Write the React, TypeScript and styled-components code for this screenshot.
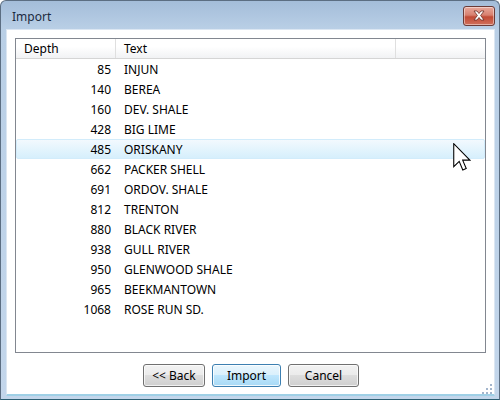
import React from "react";
import styled, { createGlobalStyle, css } from "styled-components";

const GlobalStyle = createGlobalStyle`
  html, body {
    margin: 0;
    padding: 0;
    width: 500px;
    height: 400px;
    overflow: hidden;
    background: #fff;
  }
  * { box-sizing: border-box; }
`;

interface IFormation {
  depth: number;
  name: string;
}

const formations: IFormation[] = [
  { depth: 85, name: "INJUN" },
  { depth: 140, name: "BEREA" },
  { depth: 160, name: "DEV. SHALE" },
  { depth: 428, name: "BIG LIME" },
  { depth: 485, name: "ORISKANY" },
  { depth: 662, name: "PACKER SHELL" },
  { depth: 691, name: "ORDOV. SHALE" },
  { depth: 812, name: "TRENTON" },
  { depth: 880, name: "BLACK RIVER" },
  { depth: 938, name: "GULL RIVER" },
  { depth: 950, name: "GLENWOOD SHALE" },
  { depth: 965, name: "BEEKMANTOWN" },
  { depth: 1068, name: "ROSE RUN SD." },
];

const Window = styled.div`
  position: relative;
  width: 500px;
  height: 400px;
  display: flex;
  flex-direction: column;
  border: 1px solid #5c6e82;
  border-bottom-color: #2c5f73;
  border-radius: 6px 6px 0 0;
  background: linear-gradient(180deg, #a4bdd9 0px, #b9cfe6 28px, #c3d6eb 100%);
  font-family: "Segoe UI", "Noto Sans", "DejaVu Sans", sans-serif;
  font-size: 12px;
  color: #000;
  overflow: hidden;
`;

const TitleBar = styled.div`
  height: 28px;
  flex: none;
  display: flex;
  align-items: center;
  justify-content: space-between;
  padding: 0 4px 2px 11px;
`;

const Title = styled.span`
  font-size: 12px;
  color: #1b2b3f;
  padding-top: 5px;
`;

const CloseButton = styled.div`
  width: 32px;
  height: 20px;
  margin-top: 3px;
  border: 1px solid #6b3b37;
  border-radius: 3px;
  background: linear-gradient(180deg, #e9a99c 0%, #d7806f 45%, #c14a35 55%, #d0705b 100%);
  box-shadow: inset 0 0 0 1px rgba(255, 255, 255, 0.45);
  display: flex;
  align-items: center;
  justify-content: center;
`;

const Client = styled.div`
  flex: 1;
  margin: 0 4px 3px 5px;
  background: #fff;
  border: 1px solid #dbe6f2;
  border-bottom: 2px solid #9fd0e6;
  display: flex;
  flex-direction: column;
  padding: 8px 8px 0 8px;
`;

const ListBox = styled.div`
  height: 315px;
  border: 1px solid #828790;
  display: flex;
  flex-direction: column;
  background: #fff;
`;

const HeaderRow = styled.div`
  height: 20px;
  display: flex;
  background: linear-gradient(180deg, #ffffff 0%, #ffffff 40%, #f1f2f4 100%);
  border-bottom: 1px solid #d5d5d5;
`;

const HeaderCell = styled.div<{ $width?: number }>`
  ${(p) => (p.$width ? css`width: ${p.$width}px;` : css`flex: 1;`)}
  flex-shrink: 0;
  border-right: 1px solid #dfdfdf;
  padding: 0 0 0 8px;
  line-height: 19px;
  color: #000;
  &:last-child {
    border-right: none;
  }
`;

const Body = styled.div`
  display: flex;
  flex-direction: column;
`;

const Row = styled.div<{ $hot?: boolean }>`
  height: 20px;
  display: flex;
  align-items: center;
  border: 1px solid transparent;
  border-radius: 2px;
  ${(p) =>
    p.$hot &&
    css`
      border-color: #d2ecfb;
      background: linear-gradient(180deg, #f2f9fe 0%, #e4f4fd 50%, #d6effc 100%);
    `}
`;

const DepthCell = styled.div`
  width: 98px;
  text-align: right;
  padding-right: 4px;
`;

const NameCell = styled.div`
  padding-left: 9px;
`;

const ButtonBar = styled.div`
  flex: 1;
  display: flex;
  justify-content: center;
  align-items: flex-start;
  gap: 7px;
  padding-top: 11px;
  margin-left: 1px;
`;

const Button = styled.button<{ $width: number; $default?: boolean }>`
  width: ${(p) => p.$width}px;
  height: 23px;
  font-family: inherit;
  font-size: 12px;
  color: #000;
  padding: 0;
  border-radius: 3px;
  border: 1px solid #707070;
  background: linear-gradient(180deg, #f2f2f2 0%, #ebebeb 49%, #dddddd 50%, #cfcfcf 100%);
  box-shadow: inset 0 0 0 1px rgba(255, 255, 255, 0.7);
  ${(p) =>
    p.$default &&
    css`
      border-color: #3c7fb1;
      background: linear-gradient(180deg, #eaf6fd 0%, #d9f0fc 49%, #bee6fd 50%, #a7d9f5 100%);
      box-shadow: inset 0 0 0 1px rgba(255, 255, 255, 0.8);
    `}
`;

const Grip = styled.div`
  position: absolute;
  right: 6px;
  bottom: 6px;
  width: 11px;
  height: 11px;
`;

const Cursor = styled.div`
  position: absolute;
  left: 452px;
  top: 142px;
  width: 18px;
  height: 28px;
`;

const App: React.FC = () => {
  return (
    <>
      <GlobalStyle />
      <Window>
        <TitleBar>
          <Title>Import</Title>
          <CloseButton>
            <svg width="14" height="11" viewBox="0 0 14 11">
              <path
                d="M2 1 L5 1 L7 3.5 L9 1 L12 1 L8.6 5.5 L12 10 L9 10 L7 7.5 L5 10 L2 10 L5.4 5.5 Z"
                fill="#ffffff"
                stroke="#6a2e26"
                strokeWidth="0.8"
                strokeLinejoin="round"
              />
            </svg>
          </CloseButton>
        </TitleBar>
        <Client>
          <ListBox>
            <HeaderRow>
              <HeaderCell $width={100}>Depth</HeaderCell>
              <HeaderCell $width={280}>Text</HeaderCell>
              <HeaderCell />
            </HeaderRow>
            <Body>
              {formations.map((f) => (
                <Row key={f.depth} $hot={f.depth === 485}>
                  <DepthCell>{f.depth}</DepthCell>
                  <NameCell>{f.name}</NameCell>
                </Row>
              ))}
            </Body>
          </ListBox>
          <ButtonBar>
            <Button $width={62}>&lt;&lt; Back</Button>
            <Button $width={69} $default>
              Import
            </Button>
            <Button $width={71}>Cancel</Button>
          </ButtonBar>
        </Client>
        <Grip>
          <svg width="11" height="11" viewBox="0 0 11 11">
            {[
              [8, 0],
              [4, 4],
              [8, 4],
              [0, 8],
              [4, 8],
              [8, 8],
            ].map(([x, y]) => (
              <rect key={`${x}-${y}`} x={x} y={y} width="2" height="2" fill="#a3b5cc" />
            ))}
          </svg>
        </Grip>
        <Cursor>
          <svg width="18" height="28" viewBox="0 0 12.5 19.5">
            <path
              d="M0.5 0.5 L0.5 16.5 L4.3 12.8 L6.8 18.8 L9.2 17.8 L6.7 11.9 L11.7 11.9 Z"
              fill="#ffffff"
              stroke="#000000"
              strokeWidth="0.75"
              strokeLinejoin="miter"
            />
          </svg>
        </Cursor>
      </Window>
    </>
  );
};

export default App;
